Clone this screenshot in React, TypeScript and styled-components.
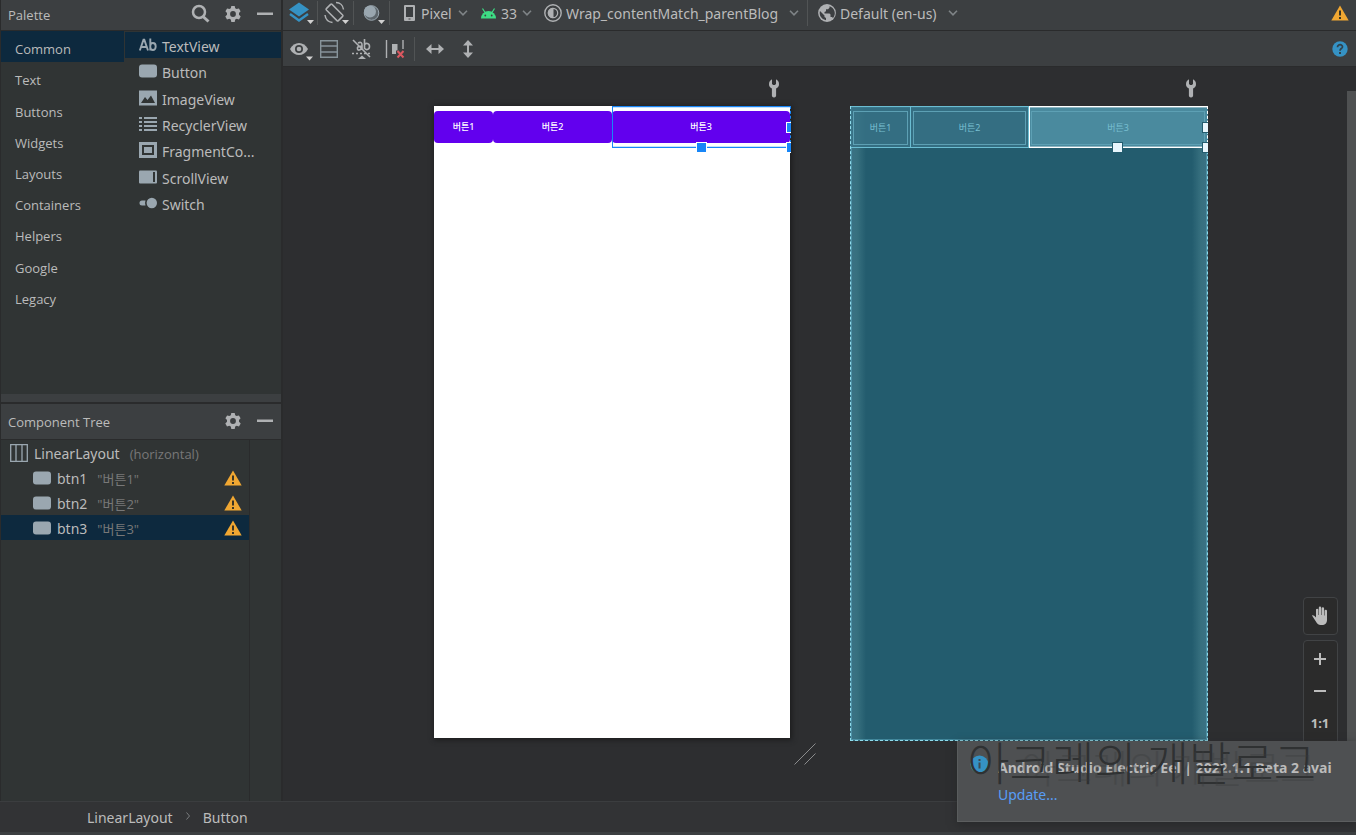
import React from "react";
import styled, { createGlobalStyle, css } from "styled-components";

const c = {
  bar: "#3c3f41",
  panel: "#303434",
  canvas: "#2d2e30",
  line: "#2a2b2c",
  select: "#0d293e",
  text: "#bbbbbb",
  icon: "#afb1b3",
  glyph: "#9aa7b0",
  blue: "#3592c4",
  warn: "#f0a732",
};

const Global = createGlobalStyle`
  *, *::before, *::after { box-sizing: border-box; }
  body {
    margin: 0;
    background: ${c.canvas};
    color: ${c.text};
    font-family: "Noto Sans", "Noto Sans CJK KR", sans-serif;
    font-size: 14px;
    line-height: 20px;
  }
  button, select { font: inherit; color: inherit; background: none; border: 0; padding: 0; margin: 0; }
  ul { list-style: none; margin: 0; padding: 0; }
  svg { display: block; flex: none; }
`;

const Page = styled.div`
  display: grid;
  grid-template-columns: 282px minmax(0, 1fr);
  grid-template-rows: minmax(0, 1fr) 34px;
  height: 100vh;
  overflow: hidden;
  position: relative;
`;

const Sidebar = styled.aside`
  display: flex;
  flex-direction: column;
  min-height: 0;
  background: ${c.panel};
  border-left: 1px solid ${c.line};
  border-right: 1px solid ${c.line};
`;

const PanelHeader = styled.header<{ $h: number }>`
  display: flex;
  flex: none;
  align-items: center;
  gap: 14px;
  height: ${(p) => p.$h}px;
  padding: 0 7px 2px;
  background: ${c.bar};
  border-bottom: 1px solid ${c.line};
`;

const PanelTitle = styled.h2`
  flex: 1;
  margin: 0;
  padding-top: 2px;
  font-family: "Open Sans", sans-serif;
  font-size: 13px;
  font-weight: 400;
`;

const IconButton = styled.button<{ $w?: number }>`
  display: flex;
  align-items: center;
  justify-content: center;
  flex: none;
  width: ${(p) => p.$w ?? 18}px;
  height: 24px;
  color: ${c.icon};
`;

const PaletteBody = styled.div`
  display: grid;
  grid-template-columns: 123px minmax(0, 1fr);
  column-gap: 1px;
  flex: none;
  height: 363px;
`;

const Categories = styled.ul`
  display: grid;
  grid-auto-rows: 1fr;
  height: 281px;
`;

const CategoryButton = styled.button<{ $on?: boolean }>`
  display: flex;
  align-items: center;
  width: 100%;
  height: 100%;
  padding: 5px 14px 0;
  font-family: "Open Sans", sans-serif;
  font-size: 13px;
  line-height: 18px;
  background: ${(p) => (p.$on ? c.select : "transparent")};
`;

const Items = styled.ul`
  display: grid;
  grid-auto-rows: 1fr;
  height: 185px;
  padding-top: 1px;
`;

const ItemButton = styled.button<{ $on?: boolean }>`
  display: flex;
  align-items: center;
  gap: 5px;
  width: 100%;
  height: 100%;
  padding: 0 14px;
  text-align: left;
  background: ${(p) => (p.$on ? c.select : "transparent")};
`;

const ItemText = styled.span`
  padding-top: 4px;
  white-space: nowrap;
`;

const Splitter = styled.div`
  flex: none;
  height: 10px;
  background: ${c.bar};
  border-bottom: 2px solid ${c.line};
`;

const TreeBody = styled.div`
  display: grid;
  grid-template-columns: 249px 1fr;
  flex: 1;
`;

const Tree = styled.ul`
  border-right: 1px solid ${c.line};
`;

const TreeRow = styled.li<{ $child?: boolean; $on?: boolean }>`
  display: flex;
  align-items: center;
  height: 25px;
  gap: 6px;
  padding: 0 7px 0 ${(p) => (p.$child ? 32 : 9)}px;
  background: ${(p) => (p.$on ? c.select : "transparent")};
`;

const TreeName = styled.span`
  padding-top: 3px;
`;

const TreeHint = styled.span`
  flex: 1;
  padding-left: 4px;
  padding-top: 2px;
  font-family: "Open Sans", "Noto Sans CJK KR", sans-serif;
  font-size: 13px;
  color: #787878;
`;

const Editor = styled.main`
  display: flex;
  flex-direction: column;
  min-width: 0;
  border-left: 1px solid ${c.line};
`;

const Toolbar = styled.div<{ $h: number; $gap: number; $raise?: number }>`
  display: flex;
  flex: none;
  align-items: center;
  gap: ${(p) => p.$gap}px;
  height: ${(p) => p.$h}px;
  padding: 0 7px ${(p) => p.$raise ?? 0}px 6px;
  background: ${c.bar};
  border-bottom: 1px solid ${c.line};
`;

const ToolGroup = styled.div<{ $gap: number; $pad?: number; $line?: boolean }>`
  display: flex;
  align-items: center;
  gap: ${(p) => p.$gap}px;
  padding-right: ${(p) => p.$pad ?? 0}px;
  ${(p) => p.$line && css`border-right: 1px solid #515455;`}
`;

const Spacer = styled.div`
  flex: 1;
`;

const Dropdown = styled.label<{ $gap: number }>`
  display: flex;
  align-items: center;
  height: 26px;
  gap: ${(p) => p.$gap}px;
`;

const Select = styled.select<{ $w: number }>`
  appearance: none;
  width: ${(p) => p.$w}px;
  height: 24px;
  padding-top: 2px;
  outline: none;
`;

const Canvas = styled.section`
  display: flex;
  align-items: flex-start;
  gap: 59px;
  flex: 1;
  min-height: 0;
  padding: 11px 0 0 151px;
  background: ${c.canvas};
`;

const Device = styled.div<{ $w: number }>`
  position: relative;
  width: ${(p) => p.$w}px;
  flex: none;
`;

const DeviceTools = styled.div`
  display: flex;
  justify-content: flex-end;
  height: 28px;
  padding: 0 11px 8px 0;
  align-items: flex-end;
`;

const Screen = styled.div`
  height: 632px;
  margin-right: 1px;
  padding-top: 5px;
  background: #fff;
  box-shadow: 1px 1px 5px 1px #1c1d1e;
`;

const ButtonRow = styled.div<{ $cols: string }>`
  display: grid;
  grid-template-columns: ${(p) => p.$cols};
`;

const AppButton = styled.button`
  height: 32px;
  border-radius: 4px;
  background: #6200ee;
  color: #fff;
  font-size: 9px;
  line-height: 12px;
  font-weight: 500;
`;

const Selection = styled.div<{ $light?: boolean }>`
  position: absolute;
  top: 28px;
  right: 0;
  width: 179px;
  height: 42px;
  overflow: hidden;
  border: 1px solid ${(p) => (p.$light ? "#fff" : "#1886f7")};
  border-right: 1px dashed ${(p) => (p.$light ? "#fff" : "#1886f7")};
  box-shadow: inset 0 1px ${(p) => (p.$light ? "#ffffff60" : "#1886f740")}, inset 0 -1px ${(p) => (p.$light ? "#ffffff60" : "#1886f740")};
`;

const Handles = styled.div`
  position: absolute;
  top: 28px;
  right: 0;
  width: 179px;
  height: 48px;
  overflow: hidden;
`;

const Handle = styled.i<{ $x: number; $y: number; $light?: boolean }>`
  position: absolute;
  left: ${(p) => p.$x}px;
  top: ${(p) => p.$y}px;
  width: 11px;
  height: 11px;
  border: 1px solid ${(p) => (p.$light ? "#235c6e" : "#fff")};
  background: ${(p) => (p.$light ? "#e8f6fd" : "#1886f7")};
`;

const Blueprint = styled.div`
  height: 635px;
  border: 1px dashed #8fdcec;
  box-shadow: inset 0 0 0 1px #5fb0c580;
  background: linear-gradient(90deg, #3b7285 0, #37707f 6px, #235c6e 15px, #235c6e calc(100% - 15px), #37707f calc(100% - 6px), #3b7285 100%);
`;

const BlueCell = styled.div<{ $on?: boolean }>`
  height: 42px;
  padding: 4px 2px 3px;
  margin-top: -1px;
  border: 1px solid #6bbdd2;
  border-left-width: 0;
  border-right-width: ${(p) => (p.$on ? 0 : 1)}px;
  background: ${(p) => (p.$on ? "#4a8a9e" : "#387387cc")};
`;

const BlueButton = styled.div`
  display: flex;
  align-items: center;
  justify-content: center;
  height: 34px;
  border: 1px solid #5da0b4;
  color: #78bfd1;
  font-size: 9px;
  line-height: 12px;
`;

const Grip = styled.svg`
  position: absolute;
  right: -25px;
  bottom: -27px;
`;

const ScrollBar = styled.div`
  width: 9px;
  margin-top: 13px;
  margin-left: auto;
  align-self: stretch;
  background: #4f5152;
`;

const ZoomTools = styled.div`
  position: absolute;
  right: 18px;
  top: 597px;
  display: flex;
  flex-direction: column;
  gap: 5px;
`;

const ZoomBox = styled.div<{ $h: number }>`
  display: flex;
  flex-direction: column;
  align-items: center;
  width: 35px;
  height: ${(p) => p.$h}px;
  padding: 2px 1px 0 0;
  border: 1px solid #414345;
  border-radius: 4px;
  background: #2b2b2b;
`;

const ZoomButton = styled.button`
  display: flex;
  align-items: center;
  justify-content: center;
  width: 31px;
  height: 32px;
  font-size: 13px;
  font-weight: 700;
  color: #bcbcbc;
`;

const StatusBar = styled.nav`
  grid-column: 1 / -1;
  display: flex;
  align-items: center;
  gap: 13px;
  padding: 0 0 2px 87px;
  background: #323335;
  border-top: 1px solid #3b3d3f;
  border-bottom: 3px solid ${c.bar};
`;

const Crumb = styled.a`
  color: inherit;
  text-decoration: none;
  padding-top: 4px;
`;

const Notice = styled.aside`
  position: absolute;
  right: 0;
  top: 741px;
  width: 399px;
  height: 81px;
  display: grid;
  grid-template-columns: 20px 346px;
  column-gap: 8px;
  padding: 17px 0 0 12px;
  border-left: 1px solid #595c5d;
  border-bottom: 1px solid #5c5e5f;
  background: #4e5052;
  box-shadow: 0 3px 8px #28292b;
  svg { margin-top: -3px; }
`;

const NoticeTitle = styled.strong`
  display: block;
  overflow: hidden;
  white-space: nowrap;
  font-size: 14px;
`;

const NoticeLink = styled.a`
  display: inline-block;
  margin-top: 7px;
  color: #589df6;
  text-decoration: none;
`;

const Watermark = styled.div`
  position: absolute;
  right: 40px;
  top: 730px;
  font-family: "Noto Sans CJK KR", sans-serif;
  font-size: 46px;
  font-weight: 300;
  line-height: 60px;
  white-space: nowrap;
  color: #2f3132;
  &::after {
    content: attr(data-echo);
    position: absolute;
    right: 0;
    top: 6px;
    font-size: 39px;
    color: #3a3c3d;
    opacity: 0.35;
  }
`;

const Corner = () => <path d="M18 20h7l-3.500 4z" fill="#d0d0d0" />;

const Search = () => (
  <svg width="20" height="20" viewBox="0 0 20 20" fill="none" stroke={c.icon}>
    <circle cx="8" cy="8" r="6" strokeWidth="2.500" />
    <path d="M12 12.500l5.500 5" strokeWidth="3" />
  </svg>
);

const Gear = () => (
  <svg width="16" height="16" viewBox="0 0 16 16" fill={c.icon} fillRule="evenodd">
    <path d="M6.300 0h3.400l.5 2.300 1.400.8L13.900 2.400l1.700 2.900L14 6.900v1.900l1.700 1.700-1.700 2.900-2.300-.7-1.500.9L9.700 16H6.300l-.5-2.400-1.500-.9-2.300.7-1.700-2.900L2 8.800V6.900L.4 5.300l1.700-2.900 2.300.7 1.400-.8zM8 5.100a2.900 2.900 0 1 0 0 5.800 2.900 2.900 0 0 0 0-5.800z" />
  </svg>
);

const Minus = () => (
  <svg width="16" height="4" viewBox="0 0 16 4"><path d="M0 .5h16v2.500H0z" fill={c.icon} /></svg>
);

const Chevron = () => (
  <svg width="10" height="6" viewBox="0 0 10 6" fill="none" stroke="#7f8487" strokeWidth="1.600">
    <path d="M1 .8l4 4 4-4" />
  </svg>
);

const Warning = () => (
  <svg width="18" height="16" viewBox="0 0 18 16">
    <path d="M9 .5L17.700 15.500H.3z" fill={c.warn} />
    <path d="M8 5.500h2v5H8zM8 12h2v2H8z" fill="#3a3424" />
  </svg>
);

const ButtonGlyph = () => (
  <svg width="18" height="14" viewBox="0 0 18 14"><rect y=".5" width="18" height="13" rx="3" fill={c.glyph} /></svg>
);

const Wrench = () => (
  <svg width="12" height="19" viewBox="0 0 12 19" fill={c.icon}>
    <path d="M4 .3v4.700l1.200 1h1.600l1.200-1V.3C10 1.300 11 3 11 5.200c0 2-1 3.500-2.900 4.400v7.200A1.900 1.900 0 0 1 6.200 18.500H5.800a1.900 1.900 0 0 1-1.900-1.700V9.600C2 8.700 1 7.200 1 5.200 1 3 2 1.300 4 .3z" />
  </svg>
);

const glyphs: Record<string, React.ReactNode> = {
  TextView: (
    <svg width="18" height="14" viewBox="0 0 18 14" fill="none" stroke={c.glyph} strokeWidth="1.900">
      <path d="M.8 12.500L4.500 1.800h.8L9 12.500M2.200 9h5.400M11.300 .5v12M11.300 8c0-2 1-3 2.600-3s2.800 1.200 2.800 3.500-1.200 3.500-2.800 3.500-2.600-1-2.600-3" />
    </svg>
  ),
  Button: <ButtonGlyph />,
  ImageView: (
    <svg width="18" height="16" viewBox="0 0 18 16">
      <path d="M0 .5h18v15H0z" fill={c.glyph} />
      <path d="M2 13l4-6 2.500 3L12 5.500l4 7.500z" fill={c.panel} />
    </svg>
  ),
  RecyclerView: (
    <svg width="18" height="14" viewBox="0 0 18 14" fill={c.glyph} shapeRendering="crispEdges">
      <path d="M0 0h3v2H0zM5 0h13v2H5zM0 4h3v2H0zM5 4h13v2H5zM0 8h3v2H0zM5 8h13v2H5zM0 12h3v2H0zM5 12h13v2H5z" />
    </svg>
  ),
  "FragmentCo...": (
    <svg width="18" height="16" viewBox="0 0 18 16">
      <path d="M1.500 1.500h15v13h-15z" fill="none" stroke={c.glyph} strokeWidth="3" />
      <path d="M5 5h8v6H5z" fill={c.glyph} />
    </svg>
  ),
  ScrollView: (
    <svg width="18" height="14" viewBox="0 0 18 14">
      <rect y=".5" width="18" height="13" rx="1" fill={c.glyph} />
      <path d="M14 2h2v10h-2z" fill={c.panel} />
    </svg>
  ),
  Switch: (
    <svg width="18" height="12" viewBox="0 0 18 12" fill={c.glyph}>
      <path d="M3 3.500h3.500a7 7 0 0 0 0 5H3a2.500 2.500 0 0 1 0-5z" />
      <circle cx="12.800" cy="6" r="5.200" />
    </svg>
  ),
};

const categories = ["Common", "Text", "Buttons", "Widgets", "Layouts", "Containers", "Helpers", "Google", "Legacy"];
const labels = ["버튼1", "버튼2", "버튼3"];

function Picker({ name, value, width, gap, children }: { name: string; value: string; width: number; gap: number; children: React.ReactNode }) {
  return (
    <Dropdown $gap={gap}>
      {children}
      <Select $w={width} aria-label={name} defaultValue={value}>
        <option>{value}</option>
      </Select>
      <Chevron />
    </Dropdown>
  );
}

export default function App() {
  return (
    <>
      <Global />
      <Page>
        <Sidebar>
          <PanelHeader $h={31}>
            <PanelTitle>Palette</PanelTitle>
            <IconButton aria-label="Search"><Search /></IconButton>
            <IconButton aria-label="Palette settings"><Gear /></IconButton>
            <IconButton aria-label="Hide palette"><Minus /></IconButton>
          </PanelHeader>
          <PaletteBody>
            <Categories>
              {categories.map((name, i) => (
                <li key={name}><CategoryButton $on={i === 0}>{name}</CategoryButton></li>
              ))}
            </Categories>
            <Items>
              {Object.keys(glyphs).map((name, i) => (
                <li key={name}>
                  <ItemButton $on={i === 0}>{glyphs[name]}<ItemText>{name}</ItemText></ItemButton>
                </li>
              ))}
            </Items>
          </PaletteBody>
          <Splitter />
          <PanelHeader $h={36}>
            <PanelTitle>Component Tree</PanelTitle>
            <IconButton aria-label="Tree settings"><Gear /></IconButton>
            <IconButton aria-label="Hide tree"><Minus /></IconButton>
          </PanelHeader>
          <TreeBody>
            <Tree>
              <TreeRow>
                <svg width="18" height="18" viewBox="0 0 18 18" fill="none" stroke={c.glyph} strokeWidth="1.300">
                  <path d="M.7.700h16.600v16.600H.7zM6 .7v16.600M12 .7v16.600" />
                </svg>
                <TreeName>LinearLayout</TreeName>
                <TreeHint>(horizontal)</TreeHint>
              </TreeRow>
              {labels.map((label, i) => (
                <TreeRow key={label} $child $on={i === 2}>
                  <ButtonGlyph />
                  <TreeName>{`btn${i + 1}`}</TreeName>
                  <TreeHint>{`"${label}"`}</TreeHint>
                  <Warning />
                </TreeRow>
              ))}
            </Tree>
          </TreeBody>
        </Sidebar>

        <Editor>
          <Toolbar $h={31} $gap={6} $raise={4}>
            <ToolGroup $gap={0} $pad={3} $line>
              <IconButton $w={25} aria-label="Design surface">
                <svg width="25" height="26" viewBox="0 0 25 26">
                  <path d="M10 2.500l10 7-10 7-10-7z" fill={c.blue} />
                  <path d="M1 14l9 6.500 9-6.500" fill="none" stroke={c.blue} strokeWidth="2.400" />
                  <Corner />
                </svg>
              </IconButton>
            </ToolGroup>
            <ToolGroup $gap={0} $pad={4} $line>
              <IconButton $w={25} aria-label="Orientation">
                <svg width="25" height="26" viewBox="0 0 25 26" fill="none" stroke={c.icon} strokeWidth="1.500">
                  <rect x="6.500" y="4" width="8" height="17" rx="1" transform="rotate(-45 10.500 12.500)" />
                  <path d="M12 2.500c4 0 7 3 7.500 7M1 15c.5 4 3.500 7 7.500 7.500" />
                  <g stroke="none"><Corner /></g>
                </svg>
              </IconButton>
            </ToolGroup>
            <ToolGroup $gap={0} $pad={4} $line>
              <IconButton $w={25} aria-label="Night mode">
                <svg width="25" height="26" viewBox="0 0 25 26">
                  <circle cx="11.500" cy="13" r="7.300" fill="#5d666c" stroke={c.glyph} />
                  <circle cx="10" cy="11.500" r="6" fill={c.glyph} />
                  <Corner />
                </svg>
              </IconButton>
            </ToolGroup>
            <ToolGroup $gap={12} $pad={8} $line>
              <Picker name="Device" value="Pixel" width={32} gap={5}>
                <svg width="20" height="16" viewBox="-1 0 20 16" fill={c.icon} fillRule="evenodd">
                  <path d="M8 0h9a1 1 0 0 1 1 1v14a1 1 0 0 1-1 1H8a1 1 0 0 1-1-1V1a1 1 0 0 1 1-1zm1 2v10h7V2zm2.500 11.500v1h2v-1z" />
                </svg>
              </Picker>
              <Picker name="API level" value="33" width={17} gap={4}>
                <svg width="17" height="11" viewBox="0 0 17 11">
                  <path d="M1 10.500a7.500 7.500 0 0 1 15 0z" fill="#3ddc84" />
                  <path d="M2.500.5L5 4.500M14.500.5L12 4.500" stroke="#3ddc84" strokeWidth="1.200" />
                  <circle cx="5.300" cy="7.500" r=".9" fill={c.bar} /><circle cx="11.700" cy="7.500" r=".9" fill={c.bar} />
                </svg>
              </Picker>
              <Picker name="Theme" value="Wrap_contentMatch_parentBlog" width={219} gap={4}>
                <svg width="18" height="18" viewBox="0 0 18 18" fill="none" stroke={c.icon}>
                  <circle cx="9" cy="9" r="8.200" strokeWidth="1.400" />
                  <circle cx="9" cy="9" r="4.700" strokeWidth="1.200" />
                  <path d="M9 4.300a4.700 4.700 0 0 0 0 9.400z" fill={c.icon} />
                </svg>
              </Picker>
            </ToolGroup>
            <ToolGroup $gap={0}>
              <Picker name="Locale" value="Default (en-us)" width={104} gap={4}>
                <svg width="22" height="18" viewBox="-4 0 22 18">
                  <circle cx="9" cy="9" r="8.900" fill={c.icon} />
                  <path d="M2 7l4.500 4.500v1.500l1.500 1v2.300A7.300 7.300 0 0 1 2 7zM11.500 2.200v1.500L10 5.300H8v2L6.500 8v1.500h5l1 1V13h1.500l1 1A7.300 7.300 0 0 0 11.500 2.200z" fill={c.bar} />
                </svg>
              </Picker>
            </ToolGroup>
            <Spacer />
            <IconButton aria-label="Warnings"><Warning /></IconButton>
          </Toolbar>

          <Toolbar $h={36} $gap={11}>
            <ToolGroup $gap={7} $pad={9} $line>
              <IconButton $w={24} aria-label="View options">
                <svg width="24" height="26" viewBox="0 0 24 26">
                  <path d="M1 13c4-8 14-8 18 0-4 8-14 8-18 0z" fill={c.icon} />
                  <circle cx="10" cy="13" r="4" fill={c.bar} /><circle cx="10" cy="13" r="2.300" fill={c.icon} />
                  <path d="M17 20.500h7l-3.500 4z" fill="#d0d0d0" />
                </svg>
              </IconButton>
              <IconButton aria-label="Layout bounds">
                <svg width="18" height="18" viewBox="0 0 18 18" fill="none" stroke="#87939a" strokeWidth="1.400">
                  <path d="M.7.700h16.600v16.600H.7zM.7 6h16.600M.7 12h16.600" />
                </svg>
              </IconButton>
              <IconButton $w={33} aria-label="Hide text">
                <svg width="22" height="22" viewBox="0 0 22 22" fill="none" stroke={c.icon} strokeWidth="1.600">
                  <path d="M2 2l17 17M7 5c3-1.500 4 0 4 2v5M10.500 8c-3 0-4.500 1-4 3s3 1 4-.5M13.500 1v10M13.500 7c1-2.500 5-2 5 1.500s-4 4-5 1.500" />
                  <path d="M1 15.500h20" strokeDasharray="2 2" strokeWidth="1.300" />
                  <path d="M7 21l4-3.500 4 3.500z" fill={c.icon} stroke="none" />
                </svg>
              </IconButton>
              <IconButton $w={20} aria-label="Clear constraints">
                <svg width="20" height="20" viewBox="0 0 20 20" fill="none" stroke={c.icon} strokeWidth="1.400">
                  <path d="M1.500 1v18M18 1v9" />
                  <path d="M7 5h5.500v6.500H11V15H7z" fill={c.icon} stroke="none" />
                  <path d="M12.500 12l6 6.500M18.500 12l-6 6.500" stroke="#db5860" strokeWidth="2" />
                </svg>
              </IconButton>
            </ToolGroup>
            <ToolGroup $gap={15}>
              <IconButton aria-label="Expand horizontally">
                <svg width="18" height="12" viewBox="0 0 18 12" fill={c.icon}>
                  <path d="M0 6l5.500-5v4h7V1L18 6l-5.500 5V7h-7v4z" />
                </svg>
              </IconButton>
              <IconButton aria-label="Expand vertically">
                <svg width="12" height="18" viewBox="0 0 12 18" fill={c.icon}>
                  <path d="M6 0l5 5.500H7v7h4L6 18l-5-5.500h4v-7H1z" />
                </svg>
              </IconButton>
            </ToolGroup>
            <Spacer />
            <IconButton aria-label="Help">
              <svg width="16" height="16" viewBox="0 0 16 16">
                <circle cx="8" cy="8" r="7.700" fill={c.blue} />
                <path d="M5.500 6.200C5.500 2.800 10.700 3 10.500 6c-.1 1.600-2.500 1.600-2.500 3.700" fill="none" stroke="#31424c" strokeWidth="1.700" />
                <path d="M7 11h2v2H7z" fill="#31424c" />
              </svg>
            </IconButton>
          </Toolbar>

          <Canvas>
            <Device $w={357}>
              <DeviceTools><Wrench /></DeviceTools>
              <Screen>
                <ButtonRow $cols="59fr 119fr 178fr">
                  {labels.map((l) => <AppButton key={l}>{l}</AppButton>)}
                </ButtonRow>
              </Screen>
              <Selection />
              <Handles>
                <Handle $x={84} $y={36} />
                <Handle $x={174} $y={16} />
                <Handle $x={174} $y={36} />
              </Handles>
              <Grip width="22" height="22" viewBox="0 0 22 22" stroke="#8a8b8c">
                <path d="M.5 21.500l21-21M10.500 21.500l11-11" />
              </Grip>
            </Device>
            <Device $w={358}>
              <DeviceTools><Wrench /></DeviceTools>
              <Blueprint>
                <ButtonRow $cols="60fr 118fr 178fr">
                  {labels.map((l, i) => (
                    <BlueCell key={l} $on={i === 2}><BlueButton>{l}</BlueButton></BlueCell>
                  ))}
                </ButtonRow>
              </Blueprint>
              <Selection $light />
              <Handles>
                <Handle $light $x={83} $y={36} />
                <Handle $light $x={173} $y={16} />
                <Handle $light $x={173} $y={36} />
              </Handles>
            </Device>
            <ScrollBar />
          </Canvas>
        </Editor>

        <StatusBar aria-label="Breadcrumb">
          <Crumb href="#layout">LinearLayout</Crumb>
          <svg width="4" height="8" viewBox="0 0 4 8" fill="none" stroke="#7c7e80"><path d="M.5.500l3 3.500-3 3.500" /></svg>
          <Crumb href="#button">Button</Crumb>
        </StatusBar>

        <ZoomTools>
          <ZoomBox $h={38}>
            <ZoomButton aria-label="Pan">
              <svg width="18" height="20" viewBox="0 0 18 20" fill="#bcbcbc">
                <path d="M1 9.500c1-.7 2-.2 4 2V3.500a1.200 1.200 0 0 1 2.300 0V9h.5V1.700a1.200 1.200 0 0 1 2.400 0V9h.5V2.500a1.200 1.200 0 0 1 2.400 0V9.500h.5V5a1.200 1.200 0 0 1 2.400 0v9c0 3-2 5-5 5H9.500c-2 0-3-1-4-2.500z" />
              </svg>
            </ZoomButton>
          </ZoomBox>
          <ZoomBox $h={110}>
            <ZoomButton aria-label="Zoom in">
              <svg width="14" height="14" viewBox="0 0 14 14" fill="#bcbcbc"><path d="M6 1h2v5h5v2H8v5H6V8H1V6h5z" /></svg>
            </ZoomButton>
            <ZoomButton aria-label="Zoom out">
              <svg width="14" height="4" viewBox="0 0 14 4" fill="#bcbcbc"><path d="M1 1h12v2H1z" /></svg>
            </ZoomButton>
            <ZoomButton>1:1</ZoomButton>
          </ZoomBox>
        </ZoomTools>

        <Notice>
          <svg width="19" height="19" viewBox="0 0 19 19">
            <circle cx="9.500" cy="9.500" r="9" fill={c.blue} />
            <path d="M8.500 4h2v2h-2zM8.500 7.500h2v6h-2z" fill="#3f4a50" />
          </svg>
          <div>
            <NoticeTitle>Android Studio Electric Eel | 2022.1.1 Beta 2 avai</NoticeTitle>
            <NoticeLink href="#update">Update...</NoticeLink>
          </div>
        </Notice>
        <Watermark data-echo="아크레의 개발로그">아크레의 개발로그</Watermark>
      </Page>
    </>
  );
}
